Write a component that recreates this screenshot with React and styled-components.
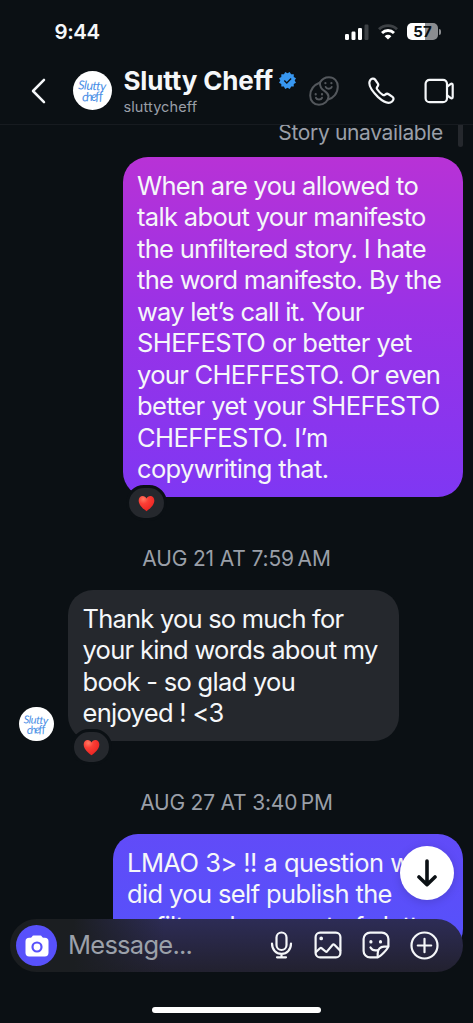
import styled, { createGlobalStyle } from "styled-components";

const GlobalStyle = createGlobalStyle`
  * {
    box-sizing: border-box;
  }
  body {
    margin: 0;
    background: #0b1014;
    font-family: Inter, "Liberation Sans", sans-serif;
    color: #f5f7f9;
  }
`;
const Screen = styled.div`
  position: relative;
  width: 473px;
  height: 1023px;
  display: flex;
  flex-direction: column;
  overflow: hidden;
  background: #0b1014;
`;
const StatusBar = styled.div`
  height: 62px;
  flex-shrink: 0;
  display: flex;
  align-items: center;
  justify-content: space-between;
  padding: 1px 32px 0 54.5px;
`;
const Clock = styled.div`
  font-size: 20.5px;
  font-weight: 600;
  line-height: 24px;
  letter-spacing: -0.4px;
`;
const StatusIcons = styled.div`
  display: flex;
  align-items: center;
  gap: 9px;
`;
const Battery = styled.div`
  display: flex;
  align-items: center;
  gap: 1px;
  &::after {
    content: "";
    width: 2px;
    height: 6px;
    border-radius: 0 2px 2px 0;
    background: #8b8d90;
  }
`;
const BatteryLevel = styled.div`
  width: 31px;
  height: 17px;
  border-radius: 5px;
  background: linear-gradient(90deg, #fff 57%, #8b8d90 57%);
  color: #0b1014;
  font-size: 15px;
  font-weight: 700;
  line-height: 17px;
  text-align: center;
`;
const Header = styled.div`
  height: 63px;
  flex-shrink: 0;
  display: flex;
  align-items: center;
  padding: 0 19px 5px 31px;
  border-bottom: 1px solid #171b20;
  svg {
    flex-shrink: 0;
  }
`;
const AvatarCircle = styled.div`
  width: ${(props) => props.$size}px;
  height: ${(props) => props.$size}px;
  flex-shrink: 0;
  border-radius: 50%;
  overflow: hidden;
  background: #fff;
  svg {
    display: block;
  }
`;
const HeaderAvatar = styled.div`
  margin: 0 11.5px 0 27px;
`;
const Names = styled.div`
  flex: 1;
  white-space: nowrap;
`;
const DisplayName = styled.div`
  display: flex;
  align-items: center;
  gap: 6px;
  font-size: 26px;
  font-weight: 700;
  line-height: 30px;
  letter-spacing: -0.15px;
`;
const Username = styled.div`
  color: #9a9fa8;
  font-size: 14.5px;
  line-height: 18px;
  margin-top: 2px;
  letter-spacing: 0.1px;
`;
const HeaderActions = styled.div`
  display: flex;
  align-items: center;
  gap: 29px;
`;
const Thread = styled.div`
  height: 820px;
  overflow: hidden;
  display: flex;
  flex-direction: column;
  > * {
    flex-shrink: 0;
  }
`;
const StoryReply = styled.div`
  height: 32px;
  display: flex;
  justify-content: flex-end;
  padding-right: 10px;
  gap: 15px;
  color: #9a9fa8;
  font-size: 21px;
  line-height: 16px;
  letter-spacing: -0.35px;
  &::after {
    content: "";
    width: 5px;
    height: 22px;
    border-radius: 0 0 3px 3px;
    background: #25282d;
  }
`;
const Row = styled.div`
  display: flex;
  align-items: flex-end;
  justify-content: ${(props) => (props.$mine ? "flex-end" : "flex-start")};
  padding: 0 10px 0 19px;
  gap: 14.5px;
`;
const Bubble = styled.div`
  position: relative;
  width: ${(props) => props.$width}px;
  padding: 12.5px 15px 12.5px 14.5px;
  border-radius: 25px;
  background: ${(props) => props.$fill};
  font-size: 25.5px;
  line-height: 31.5px;
`;
const Line = styled.div`
  white-space: nowrap;
  letter-spacing: ${(props) => props.$spacing || 0}px;
`;
const Reaction = styled.div`
  position: absolute;
  left: 3px;
  bottom: -24px;
  width: 41px;
  height: 36px;
  display: flex;
  align-items: center;
  justify-content: center;
  border: 3px solid #0b1014;
  border-radius: 18px;
  background: #25282d;
`;
const DateLabel = styled.div`
  color: #9a9fa8;
  font-size: 21px;
  line-height: 26px;
  margin: 48.5px 0 18.5px;
  text-align: center;
  letter-spacing: ${(props) => props.$spacing}px;
`;
const JumpDown = styled.div`
  position: absolute;
  left: 400px;
  top: 846px;
  width: 54px;
  height: 54px;
  display: flex;
  align-items: center;
  justify-content: center;
  border-radius: 50%;
  background: #fff;
  box-shadow: 0 2px 10px rgba(0, 0, 0, 0.15);
`;
const Composer = styled.div`
  position: absolute;
  left: 10px;
  top: 919px;
  width: 453px;
  height: 53px;
  display: flex;
  align-items: center;
  padding: 0 24px 0 6px;
  border-radius: 27px;
  background: linear-gradient(90deg, #1b1e21 14%, rgba(27, 30, 33, 0) 34%),
    linear-gradient(180deg, #2d2c56, #22212f);
`;
const CameraButton = styled.div`
  width: 41px;
  height: 41px;
  display: flex;
  align-items: center;
  justify-content: center;
  border-radius: 50%;
  background: #5851fb;
`;
const Placeholder = styled.div`
  flex: 1;
  padding: 0 0 2px 11px;
  color: #9ca1aa;
  font-size: 25.5px;
  line-height: 32px;
  letter-spacing: -0.75px;
`;
const ComposerIcons = styled.div`
  display: flex;
  align-items: center;
  gap: 20px;
  padding-bottom: 1px;
`;
const HomeIndicator = styled.div`
  width: 169px;
  height: 6px;
  margin: auto auto 10px 152px;
  border-radius: 3px;
  background: #fff;
`;

const first = [
  ["When are you allowed to", -0.7],
  ["talk about your manifesto", -0.66],
  ["the unfiltered story. I hate", -0.7],
  ["the word manifesto. By the", -0.7],
  ["way let’s call it. Your", -0.76],
  ["SHEFESTO or better yet", -0.54],
  ["your CHEFFESTO. Or even", -0.67],
  ["better yet your SHEFESTO", -0.54],
  ["CHEFFESTO. I’m", -0.55],
  ["copywriting that.", -0.63],
];
const reply = [
  ["Thank you so much for", -0.78],
  ["your kind words about my", -0.71],
  ["book - so glad you", -0.71],
  ["enjoyed ! <3", -0.7],
];
const last = [
  ["LMAO 3> !! a question w", -0.54],
  ["did you self publish the", -0.62],
  ["unfiltered account of slutty", -0.7],
];

function Lines({ lines }) {
  return lines.map(([text, spacing]) => (
    <Line key={text} $spacing={spacing}>
      {text}
    </Line>
  ));
}

function Avatar({ size }) {
  return (
    <AvatarCircle $size={size}>
      <svg width={size} height={size} viewBox="0 0 39 39">
        <g fill="#4a8fe6" fontFamily="Lato, sans-serif" fontStyle="italic" fontWeight="400">
          <text x="5" y="19" fontSize="12.5" textLength="28" transform="rotate(3 18 19)">
            Slutty
          </text>
          <text x="9" y="30" fontSize="12.5" textLength="21" transform="rotate(-4 18 28)">
            cheff
          </text>
        </g>
      </svg>
    </AvatarCircle>
  );
}

function Heart() {
  return (
    <svg width="17" height="17" viewBox="0 0 18 18">
      <defs>
        <radialGradient id="heart" cx="0.3" cy="0.2" r="0.9">
          <stop offset="0" stopColor="#ff7a62" />
          <stop offset="0.35" stopColor="#fb3e35" />
          <stop offset="1" stopColor="#e8201f" />
        </radialGradient>
      </defs>
      <path
        fill="url(#heart)"
        d="M9 17.300C6.200 15 .7 10.700.7 5.700.7 2.900 2.500 1 4.900 1 6.800 1 8.300 2 9 3.800 9.700 2 11.200 1 13.100 1c2.400 0 4.200 1.900 4.200 4.700C17.300 10.700 11.800 15 9 17.300z"
      />
    </svg>
  );
}

function Signal() {
  return (
    <svg width="24" height="16" viewBox="0 0 24 16" fill="#fff">
      <rect x="0" y="10" width="4" height="6" rx="1.2" />
      <rect x="6.5" y="7.5" width="4" height="8.5" rx="1.2" />
      <rect x="13" y="4" width="4" height="12" rx="1.2" />
      <rect x="19.5" y="0.5" width="4" height="15.5" rx="1.2" fill="#3d4145" />
    </svg>
  );
}

function Wifi() {
  return (
    <svg width="20" height="16" viewBox="0 0 20 16" fill="none" strokeWidth="2.8">
      <path d="M1 5.300a12.700 12.700 0 0 1 18 0" stroke="#3d4145" />
      <path d="M4 9a8.400 8.400 0 0 1 12 0" stroke="#fff" />
      <path d="M6.600 12.200a4.900 4.900 0 0 1 6.800 0L10 15.600z" fill="#fff" />
    </svg>
  );
}

function Verified() {
  return (
    <svg width="17" height="17" viewBox="0 0 40 40">
      <path
        fill="#3897f0"
        fillRule="evenodd"
        d="M19.998 3.094 14.638 0l-2.972 5.150H5.432v6.354L0 14.640 3.094 20 0 25.359l5.432 3.137v5.905h5.975L14.638 40l5.360-3.094L25.358 40l3.232-5.600h6.162v-6.010L40 25.359 36.905 20 40 14.641l-5.248-3.030v-6.460h-6.419L25.358 0l-5.360 3.094Zm7.415 11.225 2.254 2.287-11.430 11.500-6.835-6.930 2.244-2.258 4.587 4.581 9.180-9.180Z"
      />
    </svg>
  );
}

function FacesIcon() {
  return (
    <svg width="30" height="30" viewBox="0 0 30 30" fill="none" stroke="#53575c" strokeWidth="2" strokeLinecap="round">
      <path d="M11 6.500C12.800 3.200 16.200 1.200 20 1.200c5.300 0 8.800 4 8.800 9.300 0 6.800-4.600 11.800-9.800 13" />
      <path d="M11 6.500C4.800 9 1.200 14 1.200 19.500c0 5.500 3.800 9.300 8.800 9.300 5.200 0 9.500-3.800 9.500-8.300C19.500 14.500 10 15.500 11 6.500z" />
      <path d="M16.700 11c.8 2.200 5.200 2.200 6 0M7 21.800c.8 2.200 5.200 2.200 6 0" />
      <path d="M16.400 7v.2M22.400 7v.2M6.700 18.200v.2M13 18.200v.2" strokeWidth="2.2" />
    </svg>
  );
}

function PhoneIcon() {
  return (
    <svg width="27" height="27" viewBox="0 0 28 28" fill="none" stroke="#f5f7f9" strokeWidth="2.3" strokeLinejoin="round">
      <path d="M2.300 3.200C3.700 1.500 6 .9 7.300 2.600l2.800 4c.9 1.300.6 2.500-.4 3.600-.8.900-.8 1.600-.2 2.500 1.500 2.300 3.500 4.300 5.800 5.800.9.600 1.700.5 2.500-.2 1.100-1 2.300-1.300 3.600-.4l4 2.800c1.700 1.300 1.200 3.300-.4 4.700-3.200 2.700-8.100 1.300-14.500-4.500C4.200 14.700-.5 7.500 2.300 3.200z" />
    </svg>
  );
}

function VideoIcon() {
  return (
    <svg width="30" height="26" viewBox="0 0 30 26" fill="none" stroke="#f5f7f9" strokeWidth="2.2" strokeLinejoin="round">
      <rect x="1.6" y="1.8" width="21.4" height="22.4" rx="4" />
      <path d="m23.200 8.700 3.300-2.600c1.100-.9 2.200-.4 2.200.9v12c0 1.300-1.100 1.800-2.200.9l-3.300-2.600" />
    </svg>
  );
}

function CameraIcon() {
  return (
    <svg width="24" height="22" viewBox="0 0 24 22">
      <path
        fill="#fff"
        d="M8.500.5h7c1.200 0 1.800 2.300 3 2.300h1.300A3.700 3.700 0 0 1 23.500 6.500v11.300a3.700 3.700 0 0 1-3.700 3.700H4.200a3.700 3.700 0 0 1-3.700-3.700V6.500a3.700 3.700 0 0 1 3.700-3.700h1.300c1.200 0 1.800-2.300 3-2.300z"
      />
      <circle cx="12" cy="12" r="4.5" fill="none" stroke="#5851fb" strokeWidth="2.2" />
    </svg>
  );
}

const stroke = {
  fill: "none",
  stroke: "#f5f7f9",
  strokeWidth: 2.2,
  strokeLinecap: "round",
  strokeLinejoin: "round",
};

function MicIcon() {
  return (
    <svg width="25" height="28" viewBox="1.5 0 25 28" {...stroke}>
      <rect x="9" y="1.5" width="10" height="17.5" rx="5" />
      <path d="M4.500 12.500c0 6 4 10.300 9.500 10.300s9.500-4.300 9.500-10.300M14 22.800v3.400M9.500 26.300h9" />
    </svg>
  );
}

function PhotoIcon() {
  return (
    <svg width="28" height="28" viewBox="0 0 28 28" {...stroke}>
      <rect x="1.6" y="1.6" width="24.8" height="24.8" rx="4.5" />
      <path d="m2 21 4-3.700c.6-.5 1.200-.5 1.800 0l3.800 3.200c.5.400 1 .4 1.500-.1l5.600-6.600c.5-.6 1.100-.6 1.700 0l5.800 5.800" />
      <circle cx="7.2" cy="7.4" r="1.1" fill="#f5f7f9" strokeWidth="1.5" />
    </svg>
  );
}

function StickerIcon() {
  return (
    <svg width="28" height="28" viewBox="0 0 28 28" {...stroke}>
      <path d="M26.400 15V8.100a6.500 6.500 0 0 0-6.500-6.500H8.100a6.500 6.500 0 0 0-6.500 6.500v11.800a6.500 6.500 0 0 0 6.500 6.500H15c2.600 0 11.400-8.800 11.400-11.400z" />
      <path d="M15.700 26.200v-3.700c0-4 2.500-6.800 6.300-6.800h4.200M8.500 16.500c1.200 2.200 3.800 3.400 7 2.700" />
      <path d="M8.900 10.700v.3M18.500 10.700v.3" strokeWidth="3.200" />
    </svg>
  );
}

function PlusIcon() {
  return (
    <svg width="29" height="29" viewBox="0 0 29 29" {...stroke}>
      <circle cx="14.5" cy="14.5" r="13" />
      <path d="M14.500 7.800v13.400M7.800 14.500h13.400" />
    </svg>
  );
}

export default function App() {
  return (
    <Screen>
      <GlobalStyle />
      <StatusBar>
        <Clock>9:44</Clock>
        <StatusIcons>
          <Signal />
          <Wifi />
          <Battery>
            <BatteryLevel>57</BatteryLevel>
          </Battery>
        </StatusIcons>
      </StatusBar>
      <Header>
        <svg width="15" height="26" viewBox="0 0 15 26" {...stroke} strokeWidth="2.5">
          <path d="M13 1.800 2 13l11 11.200" />
        </svg>
        <HeaderAvatar>
          <Avatar size={39} />
        </HeaderAvatar>
        <Names>
          <DisplayName>
            Slutty Cheff
            <Verified />
          </DisplayName>
          <Username>sluttycheff</Username>
        </Names>
        <HeaderActions>
          <FacesIcon />
          <PhoneIcon />
          <VideoIcon />
        </HeaderActions>
      </Header>
      <Thread>
        <StoryReply>Story unavailable</StoryReply>
        <Row $mine>
          <Bubble $width={340.5} $fill="linear-gradient(180deg, #b832d6, #9a32e6 45%, #7f37f3)">
            <Lines lines={first} />
            <Reaction>
              <Heart />
            </Reaction>
          </Bubble>
        </Row>
        <DateLabel $spacing={-0.15}>AUG 21 AT 7:59{"\u202f"}AM</DateLabel>
        <Row>
          <Avatar size={34.5} />
          <Bubble $width={331} $fill="#25282d">
            <Lines lines={reply} />
            <Reaction>
              <Heart />
            </Reaction>
          </Bubble>
        </Row>
        <DateLabel $spacing={-0.2}>AUG 27 AT 3:40{"\u202f"}PM</DateLabel>
        <Row $mine>
          <Bubble $width={350.5} $fill="linear-gradient(180deg, #614bf8, #5552fb)">
            <Lines lines={last} />
          </Bubble>
        </Row>
      </Thread>
      <JumpDown>
        <svg width="22" height="28" viewBox="0 0 22 28" fill="none" stroke="#0b1014" strokeWidth="3.6" strokeLinecap="round" strokeLinejoin="round">
          <path d="M11 2v23.500M3 18l8 7.700 8-7.700" />
        </svg>
      </JumpDown>
      <Composer>
        <CameraButton>
          <CameraIcon />
        </CameraButton>
        <Placeholder>Message...</Placeholder>
        <ComposerIcons>
          <MicIcon />
          <PhotoIcon />
          <StickerIcon />
          <PlusIcon />
        </ComposerIcons>
      </Composer>
      <HomeIndicator />
    </Screen>
  );
}
